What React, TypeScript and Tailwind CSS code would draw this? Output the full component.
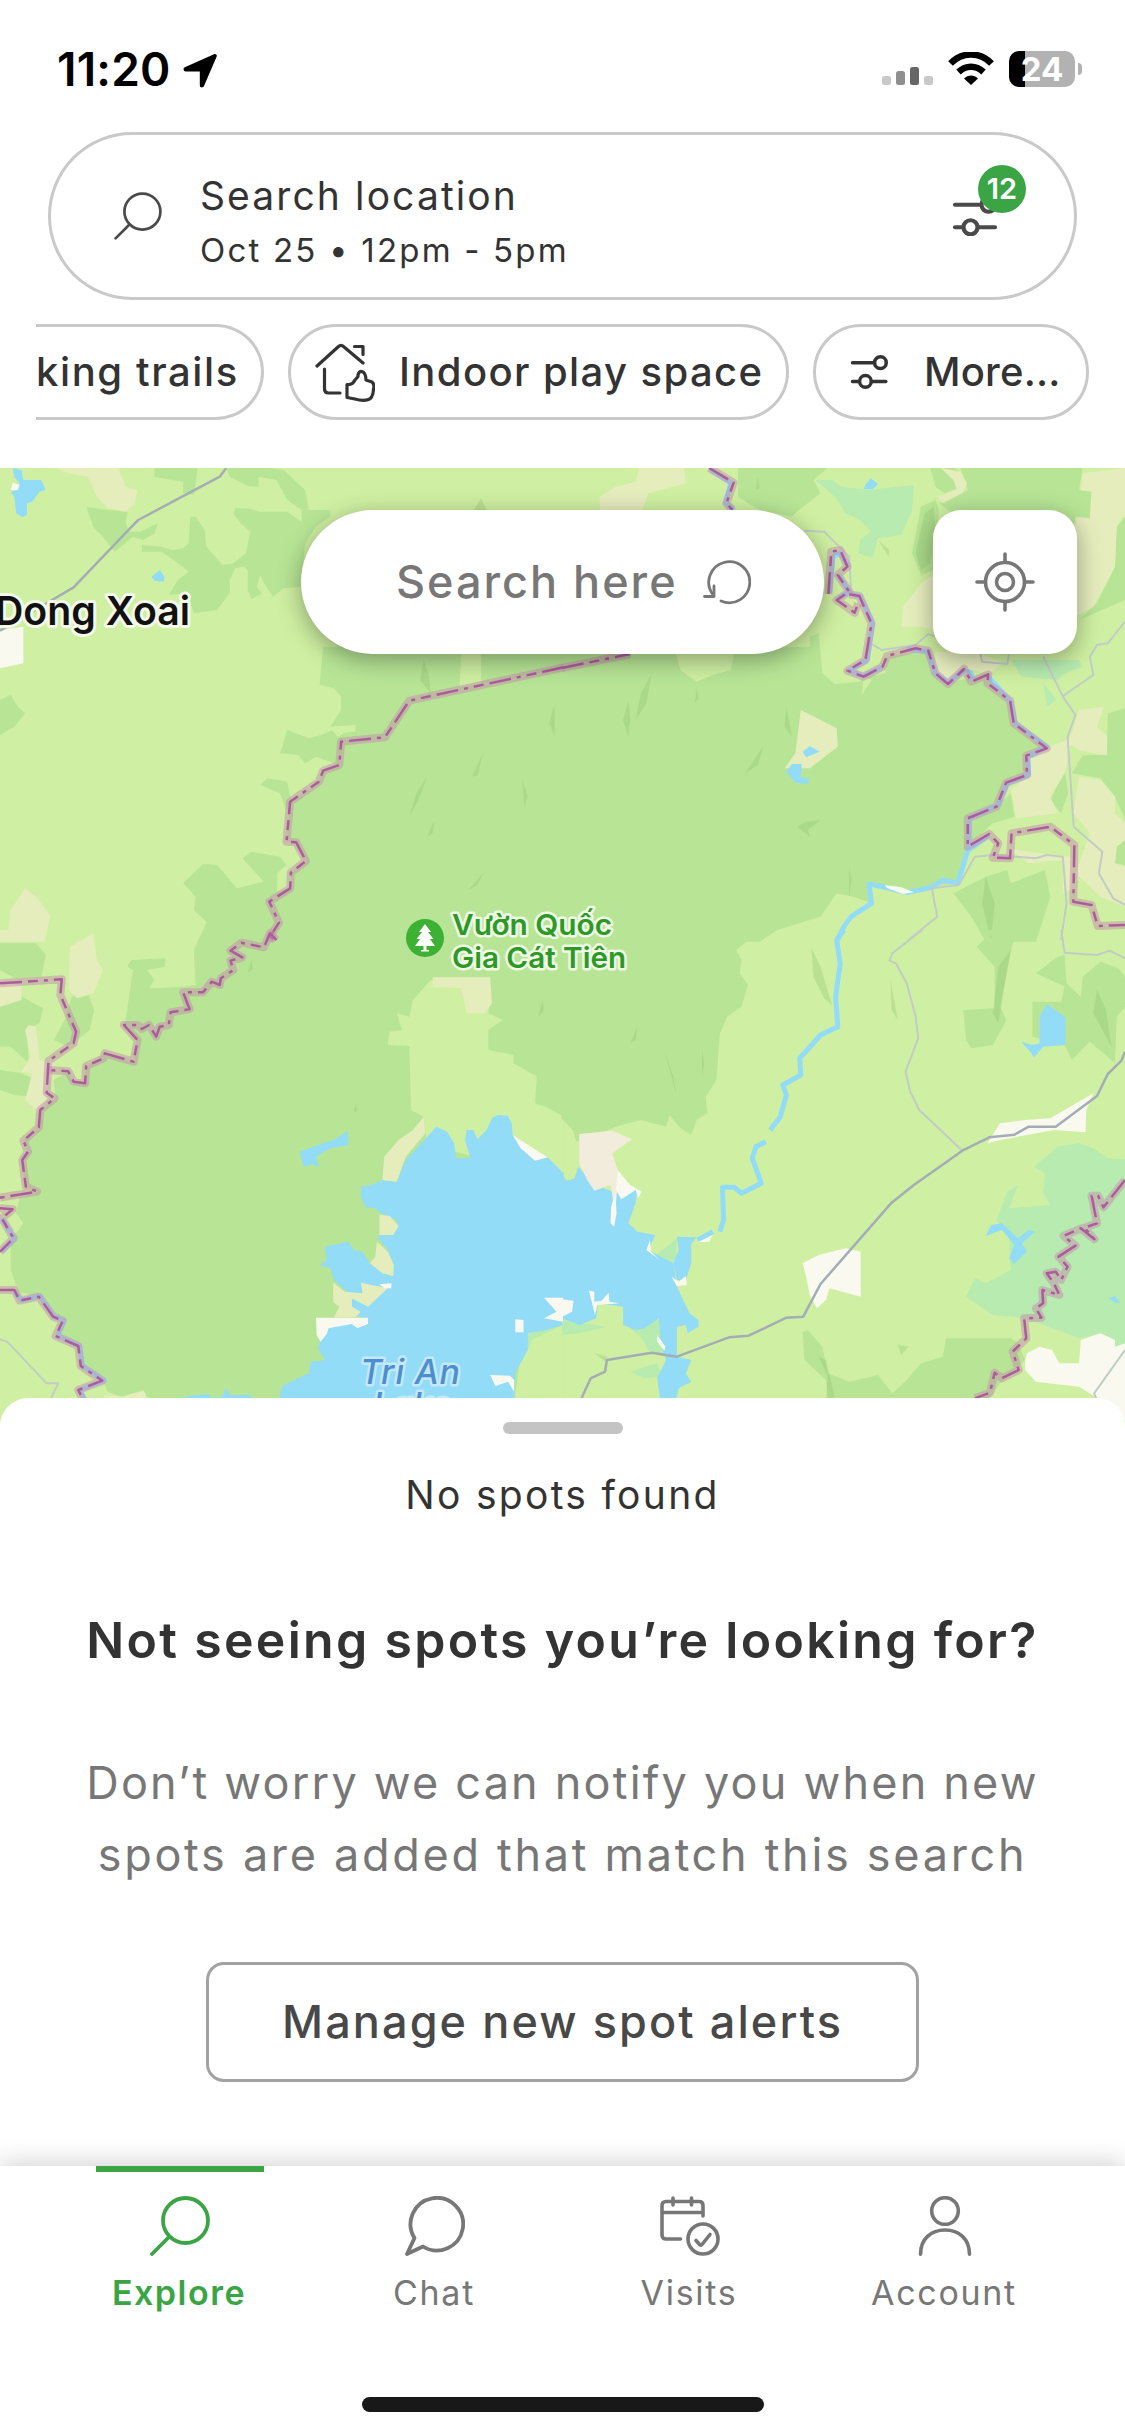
import React from 'react';

interface Tile {
  id: string;
  transform: string;
  forest: string[];
  shade: string[];
  meadow: string[];
  wetland: string[];
  sand: string[];
  town: string[];
  water: string[];
  rivers: string[];
  roads: string[];
  lanes: string[];
  borders: string[];
}

// Map geometry, split in four quadrants
const TILES: Tile[] = [
  {
    id: 'nw',
    transform: 'translate(0 460) scale(0.35906 0.33333)',
    forest: [
      '430,24 550,24 545,70 540,105 510,100 510,65 480,60 430,50',
      '630,24 750,24 790,30 850,90 860,150 920,150 920,170 880,200 850,250 838,380 790,385 760,410 735,370 725,345 715,380 730,400 700,418 690,390 690,330 680,320 655,325 640,360 640,400 605,450 540,460 520,400 470,405 495,360 525,335 490,305 450,275 395,275 395,255 450,260 480,270 510,265 525,250 530,170 545,170 570,210 575,260 620,315 650,310 685,280 697,215 670,190 650,160 655,145 690,145 725,155 800,155 840,185 840,150 800,120 770,60 720,50 720,80 690,78 640,50',
      '240,140 300,150 355,155 350,190 360,215 390,215 440,190 430,220 400,240 370,230 320,275 290,235 260,200',
      '0,720 30,705 50,740 70,760 40,800 0,825',
      '1568,560 900,560 890,675 930,685 950,710 950,750 920,800 990,795 990,815 960,818 940,830 925,810 895,825 860,835 800,810 780,880 830,885 850,910 880,890 945,915 900,935 885,970 805,1030 798,1055 780,1000 725,975 745,955 800,965 810,1020 798,1145 825,1145 852,1205 810,1240 810,1285 772,1295 772,1240 798,1215 780,1190 700,1175 675,1195 700,1225 735,1265 660,1285 605,1215 565,1212 510,1270 545,1310 540,1350 575,1385 555,1445 1568,1445',
    ],
    shade: [
      '1190,950 1160,1000 1140,1070 1165,1020',
      '1345,880 1315,950 1330,945',
      '1345,1240 1305,1290 1330,1275',
      '1180,600 1170,660 1200,700 1195,650',
      '1210,1080 1190,1130 1205,1120',
      '1455,960 1460,1040 1470,1010',
      '1545,730 1530,790 1545,830',
      '1340,115 1320,150 1355,150',
    ],
    meadow: ['1285,575 1340,575 1340,670 1280,682'],
    wetland: [],
    sand: [
      '160,24 330,24 350,80 382,90 375,130 350,155 300,145 270,110 245,50 190,40',
      '70,1285 100,1310 140,1365 125,1445 20,1445 30,1350',
    ],
    town: ['0,510 65,500 65,610 0,625', '30,90 35,68 55,75 55,90'],
    water: [
      '35,24 60,30 65,60 115,60 127,90 110,95 90,125 75,130 75,165 62,172 45,160 40,110 30,95 50,90 55,72 40,50',
      '422,350 445,330 458,350 456,365 430,362',
    ],
    rivers: [],
    roads: ['630,24 612,50 385,180 362,205 205,382 145,420 0,512'],
    lanes: [],
    borders: [
      '1570,622 1140,722 1072,832 950,845 945,915 900,932 888,965 808,1025 798,1145 825,1147 852,1203 810,1238 808,1285 750,1325 777,1388 752,1430 765,1440',
    ],
  },
  {
    id: 'ne',
    transform: 'translate(562 460) scale(0.35906 0.33333)',
    forest: [
      '0,575 690,560 690,530 715,520 725,640 760,672 830,665 840,650 900,640 905,590 1020,572 1040,640 1075,670 1185,640 1250,720 1260,790 1345,862 1295,885 1295,945 1235,970 1210,1040 1130,1075 1130,1160 1100,1270 1030,1280 960,1298 860,1270 862,1330 810,1310 765,1300 720,1370 600,1410 550,1445 0,1445',
      '490,24 740,24 700,60 720,100 660,150 640,170 550,150 490,110',
      '1025,24 1095,24 1120,60 1100,85 1065,100 1040,80',
      '1110,24 1450,24 1440,90 1475,95 1470,180 1430,190 1100,170 1050,130 1130,90',
      '1520,760 1568,745 1568,1080 1540,1010 1500,955 1420,940 1450,885 1518,885',
      '1400,930 1410,1000 1390,1060 1360,1020',
      '1210,1040 1250,1000 1260,1070 1200,1090 1130,1160 1130,1080',
      '1090,1300 1180,1250 1240,1230 1250,1270 1345,1230 1360,1310 1320,1445 1180,1445 1140,1370',
      '1545,1150 1568,1140 1568,1215 1540,1210',
      '1568,170 1545,200 1540,320 1490,430 1440,480 1568,420',
      '1000,140 1040,120 1050,150 1035,330 1000,345 975,280',
    ],
    shade: [
      '1010,160 1035,140 1040,200 1025,310 1000,330 985,280',
      '250,640 220,700 205,780 235,730',
      '375,680 370,730 380,715',
      '560,860 510,940 545,915',
      '680,1085 655,1100 690,1130 685,1110 720,1080',
      '800,1220 800,1310 806,1260',
      '625,740 620,800 640,830',
      '185,720 170,780 185,830 190,780',
      '1180,1250 1170,1330 1195,1445 1205,1330',
      '880,240 910,290 912,270',
      '545,50 540,90 550,85',
      '1450,1160 1470,1210 1462,1170',
    ],
    meadow: ['315,575 480,575 470,630 420,645 375,665 330,630', '840,650 862,660 835,705'],
    wetland: [
      '705,60 750,60 780,80 850,90 980,75 975,150 945,225 880,235 865,295 825,280 830,240 860,215 830,180 790,160 760,110',
      '1250,600 1440,600 1450,620 1400,640 1380,660 1280,650',
      '1340,670 1378,720 1350,740',
    ],
    sand: [
      '215,24 340,24 345,70 240,100 225,150 105,150 105,110 150,80 205,65',
      '1055,24 1110,35 1128,70 1115,100 1060,130 1045,110 1100,90 1090,60',
      '1450,40 1568,24 1568,160 1545,200 1540,320 1480,440 1430,470 1430,170 1470,175 1475,95 1445,90',
      '1040,340 1040,510 1000,500 945,500 950,440 1000,370',
      '1040,575 1160,580 1230,610 1190,640 1120,625 1075,670 1040,640',
      '665,750 765,805 768,860 690,925 620,925 650,880',
      '1290,885 1350,862 1420,835 1400,940 1360,1010 1380,1060 1265,1075 1250,990 1300,945',
      '1440,750 1510,740 1490,800 1518,830 1518,885 1480,880 1440,870 1410,850',
      '1440,950 1500,960 1540,1010 1540,1060 1568,1090 1568,1140 1545,1160 1540,1210 1568,1220 1568,1340 1500,1310 1430,1240 1470,1120 1425,1060',
      '1240,1165 1330,1180 1420,1190 1420,1290 1395,1300 1395,1200 1300,1210',
    ],
    town: [],
    water: [
      '845,75 860,55 880,72 865,88 840,88',
      '670,875 690,858 718,875 680,892',
      '625,935 640,912 668,912 665,950 688,958 685,972 650,968',
      '1120,625 1145,632 1150,655 1135,665',
    ],
    rivers: [
      '1130,1170 1115,1225 1100,1270 1060,1260 1030,1282 960,1298 900,1282 855,1272 862,1330 805,1370 785,1400 765,1445',
      '415,30 470,68 456,125 480,155',
      '745,400 755,290 775,280 798,320',
      '770,345 800,395 770,415',
      '810,403 832,410 865,490 850,600 800,632 840,648 893,620',
      '960,568 1020,575 1040,640 1075,668 1120,630',
      '1187,650 1250,725 1262,790 1350,860 1297,890 1300,945 1240,970 1215,1035 1135,1075 1133,1170 1190,1125',
    ],
    roads: [],
    lanes: [
      '675,212 730,215 800,290 805,390',
      '860,550 890,570 985,555 1020,522 1040,530',
      '1165,580 1170,605 1240,612 1245,580',
      '1340,590 1395,710 1430,765 1408,830 1425,1100 1505,1175 1495,1240 1535,1315 1568,1335',
      '1568,485 1520,550 1490,555 1470,590 1480,645 1395,708',
      '1105,1275 1150,1190 1200,1185 1320,1195 1350,1185 1395,1190 1405,1330 1390,1440',
      '1105,1275 1030,1285 1045,1370 965,1440',
    ],
    borders: [
      '0,624 190,582',
      '410,24 478,68 458,130 475,150',
      '742,402 750,275 775,270 795,320 768,345 800,395 765,420 815,458 825,430',
      '800,403 828,408 862,490 845,600 795,632 840,650 893,620 905,588 985,565 1020,572 1040,640 1075,672 1120,627 1140,665 1187,643 1185,670 1248,722 1258,790 1350,865 1293,887 1295,945 1237,968 1210,1040 1130,1075 1130,1160 1190,1122 1215,1150 1200,1193 1248,1195 1252,1120 1360,1100 1427,1155 1424,1325 1475,1335 1492,1398 1568,1395',
    ],
  },
  {
    id: 'sw',
    transform: 'translate(0 930) scale(0.35906 0.33333)',
    forest: [
      '565,0 540,60 545,165 510,170 415,175 430,150 410,120 460,110 460,85 365,90 355,110 370,120 350,270 345,285 380,330 375,395 290,370 240,410 235,460 200,455 190,425 150,450 155,505 110,540 108,590 65,630 80,665 62,690 70,770 105,785 55,800 45,850 65,880 30,930 30,1020 50,1085 110,1100 170,1170 155,1220 215,1245 225,1310 285,1350 300,1385 340,1400 400,1380 410,1400 520,1470 1570,1470 1570,0',
      '0,40 100,40 128,75 115,140 40,145 0,120',
      '0,210 60,200 120,235 110,280 75,300 80,400 30,350 0,350',
      '0,420 60,430 110,455 95,500 40,495 0,480',
      '200,200 245,190 262,240 250,300 190,350 150,330 180,270',
    ],
    shade: ['990,520 985,550 995,540', '1510,210 1500,260 1515,240', '700,90 690,130 705,115', '1460,80 1455,120 1465,110'],
    meadow: [
      '1200,150 1150,210 1140,260 1105,250 1120,300 1085,305 1080,345 1140,348 1145,540 1180,560 1190,640 1570,760 1570,560 1520,530 1490,520 1495,440 1430,400 1430,375 1360,360 1360,300 1400,270 1360,250 1365,150',
      '1460,1200 1570,1180 1570,1470 1425,1470',
      '60,1470 220,1405 290,1385 300,1470',
    ],
    wetland: ['1470,1260 1465,1215 1500,1200 1568,1180 1540,1200 1480,1230'],
    sand: [
      '1205,142 1365,142 1370,220 1350,250 1300,250 1285,175 1205,170',
      '195,50 260,10 270,90 287,120 260,190 215,205 190,180',
      '80,285 100,290 110,390 150,400 130,500 110,550 70,510 90,430 60,425 85,380 70,300',
      '0,150 60,165 60,210 0,230',
      '0,0 60,0 60,30 0,35',
      '290,1395 340,1400 400,1382 410,1410 290,1410',
    ],
    town: [],
    water: [
      '1190,620 1215,590 1245,605 1265,640 1270,685 1310,685 1295,630 1300,600 1318,600 1330,628 1355,600 1370,565 1385,555 1415,557 1425,580 1428,615 1450,650 1490,690 1525,682 1570,730 1570,1185 1520,1200 1470,1210 1470,1260 1435,1330 1430,1470 780,1470 780,1385 790,1365 860,1330 865,1295 905,1290 885,1255 890,1240 900,1190 1020,1170 980,1150 980,1110 1010,1095 970,1090 930,1050 920,1015 890,1005 910,990 905,950 970,935 985,960 1010,965 1030,1000 1060,1020 1090,1040 1095,1000 1080,960 1050,920 1105,900 1105,870 1060,850 1040,832 1020,835 1005,800 1005,770 1035,765 1065,750 1105,755 1130,690',
      '835,665 900,640 930,630 968,602 970,645 920,655 880,680 888,712 870,703 845,710',
      '520,1398 580,1393 590,1404 620,1400 628,1372 640,1395 700,1395 700,1420 520,1420',
    ],
    rivers: ['5,865 40,925 5,965', '40,1085 60,1110 112,1098 150,1160 178,1172 160,1218 222,1248 230,1308 290,1352 222,1380 235,1410'],
    roads: [],
    lanes: ['0,1228 20,1235 130,1360 162,1360 140,1410'],
    borders: [
      '770,30 752,10 735,52 672,38 642,62 675,82 642,92 650,120 615,145 612,165 590,155 565,187 510,187 528,237 475,247 470,285 445,290 435,320 415,285 395,297 385,285 345,285 383,330 372,395 292,370 288,385 240,408 237,460 205,455 190,424 135,420',
      '0,160 172,148 168,195 212,305 205,340 135,393 130,488 152,505 112,540 108,592 65,632 78,665 62,690 72,770 103,785 0,803',
      '0,835 35,838 5,865 38,925 0,965',
      '0,1080 40,1080 55,1112 108,1100 148,1160 175,1172 155,1218 218,1248 225,1308 285,1352 218,1380 232,1410',
    ],
  },
  {
    id: 'se',
    transform: 'translate(562 930) scale(0.35906 0.33333)',
    forest: [
      '-2,0 545,0 520,30 485,60 500,90 495,130 518,165 500,230 460,260 440,310 430,450 400,500 405,550 375,570 360,615 325,590 300,555 290,590 220,570 165,585 40,635 30,600 -2,565',
      '1155,50 1180,25 1258,30 1245,90 1220,230 1238,270 1200,345 1140,355 1125,330 1118,240 1205,235 1205,110',
      '1310,215 1390,215 1400,170 1320,130 1380,80 1400,75 1405,160 1445,200 1450,140 1500,95 1550,115 1568,140 1568,230 1545,260 1540,400 1470,335 1420,390 1400,345 1310,320',
      '670,1205 685,1200 725,1250 740,1330 800,1355 880,1335 920,1390 960,1350 1000,1300 1060,1280 1070,1225 1250,1225 1270,1240 1290,1290 1250,1330 1230,1345 1150,1470 750,1470 735,1350 675,1290',
      '1170,0 1330,0 1300,12 1180,20',
    ],
    shade: [
      '1215,110 1250,60 1215,280 1200,250',
      '1490,180 1480,250 1530,350 1515,240',
      '715,1280 740,1340 735,1410 760,1400 735,1290',
      '390,360 390,440 396,400',
      '210,290 190,340 205,330',
      '285,360 310,440 320,500 300,420',
      '695,55 720,110 752,225 730,205 700,140',
      '915,150 935,270 918,240',
      '90,1268 125,1280 122,1295',
      '935,1245 965,1250 945,1275',
    ],
    meadow: [],
    wetland: [
      '1315,710 1380,650 1440,640 1480,655 1520,685 1568,688 1568,1260 1530,1240 1500,1210 1440,1225 1380,1200 1290,1165 1200,1155 1125,1100 1150,1045 1180,1060 1250,1020 1245,920 1210,870 1240,785 1270,765 1245,835 1360,825 1340,790 1345,730',
      '0,1170 125,1190 50,1210 0,1215',
      '190,1195 275,1165 285,1280 240,1260 220,1220',
      '190,1325 265,1300 280,1340 230,1345',
      '262,975 320,925 318,1005 285,1000',
    ],
    sand: [],
    town: [
      '670,1000 715,975 790,955 832,965 832,1100 745,1075 735,1110 710,1135 690,1095 680,1040',
      '1185,640 1220,580 1290,570 1360,565 1480,490 1460,540 1458,607 1370,600 1220,630',
      '1290,1290 1295,1270 1330,1250 1365,1260 1385,1300 1440,1300 1445,1230 1500,1210 1540,1230 1540,1250 1568,1240 1568,1470 1500,1410 1440,1370 1320,1355 1290,1320',
    ],
    water: [
      '-2,735 15,752 35,745 45,710 90,765 155,790 210,780 205,820 185,880 210,905 260,915 240,960 310,1000 320,1070 355,1150 380,1170 380,1190 350,1210 345,1185 320,1190 320,1280 360,1290 345,1330 360,1355 325,1375 315,1420 275,1420 265,1345 290,1290 275,1240 270,1165 230,1195 205,1200 170,1185 170,1130 100,1120 95,1165 50,1185 -2,1165',
      '320,920 375,922 360,940 360,1000 345,1050 320,1050 310,1000 325,960',
      '1180,918 1195,885 1225,880 1270,925 1300,900 1318,905 1280,940 1295,965 1258,1002 1245,985 1260,945 1225,900',
      '1278,335 1310,345 1330,340 1330,260 1350,222 1402,262 1402,345 1340,350 1315,382 1300,360',
      '1522,1105 1540,1098 1555,1120 1540,1118',
    ],
    rivers: [
      '785,0 765,30 775,100 762,200 768,290 720,315 662,385 665,435 615,465 625,495 608,560 580,600',
      '568,635 540,650 530,685 555,760 500,790 480,772 447,772 450,870 440,905',
      '420,905 378,930',
    ],
    roads: [
      '52,1410 80,1345 120,1325 125,1290 250,1268 320,1280 465,1222 520,1217 625,1163 672,1160 720,1062 918,818 980,765 1115,662 1190,622 1260,614 1300,590 1375,590 1490,498 1520,432 1558,392 1568,365',
    ],
    lanes: [
      '1003,0 920,70 912,92 930,100 960,160 985,260 992,325 957,425 970,485 995,540 1115,662',
      '1568,1260 1482,1390 1490,1410',
      '1390,0 1400,68 1490,75 1525,62 1568,85',
    ],
    borders: [
      '1568,750 1508,832 1493,797 1475,797 1490,880 1455,893 1483,928 1445,895 1397,918 1430,947 1383,980 1408,1010 1390,1050 1375,1025 1350,1030 1370,1060 1385,1095 1338,1080 1340,1120 1320,1135 1335,1163 1287,1165 1293,1225 1255,1265 1272,1320 1225,1345 1205,1328 1192,1388 1150,1405',
    ],
  },
];

// Shoreline details that sit on top of the lakes
const SHORE: { transform: string; fill: string; points: string }[] = [
  ['sw', '#e6edbd', '1180,560 1185,610 1130,680 1105,755 1065,750 1070,680 1110,630 1150,600'],
  ['sw', '#e6edbd', '1057,855 1085,857 1110,888 1095,915 1057,915'],
  ['sw', '#e6edbd', '1050,935 1080,965 1097,1005 1095,1038 1065,1030 1030,1000 1045,980'],
  ['sw', '#e6edbd', '928,1058 960,1085 1010,1090 1005,1058 1080,1075 1025,1130 980,1105 980,1130 1005,1145 990,1162 930,1162 945,1130 928,1115'],
  ['sw', '#f9f9ef', '880,1163 1025,1163 1025,1182 995,1195 980,1182 915,1195 910,1212 893,1235 882,1215'],
  ['sw', '#f9f9ef', '1057,1063 1090,1060 1090,1075 1070,1075'],
  ['sw', '#f9f9ef', '1435,1168 1458,1170 1458,1207 1435,1207'],
  ['sw', '#f9f9ef', '1515,1103 1568,1103 1568,1175 1515,1165 1550,1145'],
  ['sw', '#f9f9ef', '1365,1335 1420,1337 1432,1350 1432,1385 1415,1355 1380,1368'],
  ['sw', '#f9f9ef', '1428,615 1485,655 1525,682 1490,692 1450,655'],
  ['se', '#f1ecdc', '48,612 140,602 195,628 140,670 155,720 155,760 148,850 135,765 90,782 70,750 48,700'],
  ['se', '#f9f9ef', '155,720 190,765 222,785 212,805 205,780 165,808 148,775 152,850 145,890 135,880 137,830 150,780'],
  ['se', '#f9f9ef', '0,1108 32,1112 28,1145 0,1160'],
  ['se', '#f9f9ef', '75,1082 90,1085 90,1115 110,1112 130,1088 132,1115 160,1120 98,1125 92,1155'],
  ['se', '#f9f9ef', '245,930 248,965 272,990 235,960'],
  ['se', '#f9f9ef', '305,1040 325,1055 345,1038 348,1065 320,1068'],
  ['se', '#f9f9ef', '265,1215 288,1250 285,1262 265,1235'],
  ['se', '#f9f9ef', '378,937 420,915 410,935'],
  ['ne', '#f9f9ef', '900,1275 945,1282 980,1297 950,1302 905,1284'],
].map(([id, fill, points]) => ({
  transform: TILES.find((t) => t.id === id)!.transform,
  fill,
  points,
}));

const Shapes = ({ points, fill, opacity }: { points: string[]; fill: string; opacity?: number }) => (
  <>
    {points.map((p) => (
      <polygon key={p} points={p} fill={fill} opacity={opacity} />
    ))}
  </>
);

interface LinesProps {
  points: string[];
  stroke: string;
  width: number;
  dash?: string;
  opacity?: number;
}

const Lines = ({ points, stroke, width, dash, opacity }: LinesProps) => (
  <>
    {points.map((p) => (
      <polyline
        key={p}
        points={p}
        fill="none"
        stroke={stroke}
        strokeWidth={width}
        strokeDasharray={dash}
        strokeLinejoin="round"
        opacity={opacity}
        vectorEffect="non-scaling-stroke"
      />
    ))}
  </>
);

const MapCanvas = () => (
  <svg className="block h-[990px] w-[1125px]" viewBox="0 468 1125 990" fontFamily="Inter, sans-serif">
    <rect y="468" width="1125" height="990" fill="#cff0a2" />
    {TILES.map((t) => (
      <g key={t.id} transform={t.transform}>
        <Shapes points={t.forest} fill="#b7e595" />
        <Shapes points={t.shade} fill="#8fc070" opacity={0.32} />
        <Shapes points={t.meadow} fill="#cff0a2" />
        <Shapes points={t.wetland} fill="#b7ebb0" />
        <Shapes points={t.sand} fill="#e6edbd" />
        <Shapes points={t.town} fill="#f9f9ef" />
        <Shapes points={t.water} fill="#92dcf8" />
        <Lines points={t.rivers} stroke="#92dcf8" width={5} />
      </g>
    ))}
    {SHORE.map((s) => (
      <polygon key={s.points} transform={s.transform} points={s.points} fill={s.fill} />
    ))}
    {TILES.map((t) => (
      <g key={t.id} transform={t.transform}>
        <Lines points={t.lanes} stroke="#c2ccc6" width={2} />
        <Lines points={t.roads} stroke="#a3adb6" width={2.5} />
        <Lines points={t.borders} stroke="#c58fae" width={8} opacity={0.5} />
        <Lines points={t.borders} stroke="#ad5c9b" width={2.5} dash="22 6 10 6 4 6" />
      </g>
    ))}

    <g fontWeight="600" paintOrder="stroke" strokeLinejoin="round">
      <text x="-5" y="625" fontSize="40" fill="#111" stroke="#f4f8ea" strokeWidth="6" textLength="195" lengthAdjust="spacingAndGlyphs">
        Dong Xoai
      </text>
      <g fill="#2b9a26" stroke="#f1f8e6" strokeWidth="5" fontSize="29">
        <text x="452" y="935" textLength="160" lengthAdjust="spacingAndGlyphs">Vườn Quốc</text>
        <text x="452" y="968" textLength="174" lengthAdjust="spacingAndGlyphs">Gia Cát Tiên</text>
      </g>
      <g fill="#4b8fd0" stroke="#c4e8f8" strokeWidth="5" fontSize="34" fontStyle="italic" fontWeight="500">
        <text x="360" y="1384" textLength="100">Tri An</text>
        <text x="373" y="1417" textLength="78">Lake</text>
      </g>
    </g>

    <circle cx="425" cy="938" r="19" fill="#3cb133" />
    <path d="M425 924l6 8h-3l5.500 7h-3.500l5 7h-8.500v4h2.500v1.500h-8v-1.500h2.500v-4h-8.500l5-7h-3.500l5.500-7h-3z" fill="#fff" />
  </svg>
);

const SearchIcon = ({ className, strokeWidth }: { className: string; strokeWidth: number }) => (
  <svg className={className} viewBox="0 0 60 60" fill="none" stroke="currentColor" strokeWidth={strokeWidth} strokeLinecap="round">
    <circle cx="35.500" cy="24.500" r="22.500" />
    <path d="M19 41L2 58" />
  </svg>
);

const SlidersIcon = ({ className }: { className: string }) => (
  <svg className={className} viewBox="0 0 48 40" fill="none" stroke="currentColor" strokeWidth="4.200" strokeLinecap="round">
    <path d="M3 8.750H29M3 31.250H11M26 31.250H43" />
    <circle cx="36.500" cy="8.750" r="7" />
    <circle cx="18.500" cy="31.250" r="7" />
  </svg>
);

const StatusBar = () => (
  <div className="flex h-[132px] items-start pt-[44px] pl-[57px]">
    <span className="w-[111px] text-[46px] leading-[50px] font-semibold tracking-[0.2px] whitespace-nowrap text-black">11:20</span>
    <svg className="mt-[9px] ml-[15px] h-[35px] w-[35px]" viewBox="0 0 35 35">
      <path d="M31 1.200c1.800-.8 3.400.8 2.600 2.600L21 33c-1 2.200-4.200 1.800-4.200-.8V18.500H2.800C.3 18.500-.3 15.300 1.800 14.300z" fill="#000" />
    </svg>
    <div className="mr-[43px] ml-auto flex items-start pt-[7px]">
      <svg className="mt-4 h-[18px] w-[51px]" viewBox="0 0 51 18">
        <rect y="9" width="9" height="9" rx="2.500" fill="#c9c9c9" />
        <rect x="14" y="4" width="9" height="14" rx="2.500" fill="#8f8f8f" />
        <rect x="28" width="9" height="18" rx="2.500" fill="#666" />
        <rect x="42" y="9" width="9" height="9" rx="2.500" fill="#c9c9c9" />
      </svg>
      <svg className="mt-px ml-[15px] h-[33px] w-[46px]" viewBox="0 0 46 33">
        <path d="M2.500 11.500C14-.5 32-.5 43.500 11.500" fill="none" stroke="#000" strokeWidth="6.500" />
        <path d="M10.500 20C18 13 28 13 35.500 20" fill="none" stroke="#000" strokeWidth="6.500" />
        <path d="M16 26.500C20 22.500 26 22.500 30 26.500L23 33z" fill="#000" />
      </svg>
      <div className="ml-[15px] flex h-9 w-[66px] items-center justify-center rounded-[10px] bg-linear-to-r from-black from-[24%] to-[#b2b2b2] to-[24%]">
        <span className="text-[33px] leading-9 font-bold text-white">24</span>
      </div>
      <div className="mt-3 ml-[3px] h-3 w-1 rounded-r-full bg-[#b2b2b2]" />
    </div>
  </div>
);

const SearchBar = () => (
  <div className="ml-12 flex h-[168px] w-[1029px] items-center rounded-full border-[3px] border-[#c9c9c9] pr-[74px] pl-[63px] text-[#333]">
    <SearchIcon className="h-12 w-12 text-[#4a4a4a]" strokeWidth={3.4} />
    <div className="ml-[38px] self-start pt-[34px]">
      <p className="text-[39px] leading-[54px] tracking-[2.1px]">Search location</p>
      <p className="mt-[5px] text-[33px] leading-[44px] tracking-[2.2px]">Oct 25 • 12pm - 5pm</p>
    </div>
    <div className="relative ml-auto text-[#4a4a4a]">
      <SlidersIcon className="h-10 w-12" />
      <span className="absolute -top-[31px] left-[26px] flex h-12 w-12 items-center justify-center rounded-full bg-[#3ba546] text-[29px] font-semibold text-white">
        12
      </span>
    </div>
  </div>
);

const HouseIcon = () => (
  <svg className="h-[60px] w-[60px]" viewBox="0 0 60 60" fill="none" stroke="currentColor" strokeWidth="3.200" strokeLinecap="round" strokeLinejoin="round">
    <path d="M2 24L23.500 4.500Q26 2 28.500 4.500L48 21" />
    <path d="M39.500 4.500H48V12.500" />
    <path d="M9.500 27V47Q9.500 51 13.500 51H25" />
    <path d="M32 42.500H34.500Q38 42 40 38L43 34.500V33Q44 29 47 29.500Q51 31 51 38L57 40Q60 43 58.500 47Q58 56 53.500 57.500Q48 59.500 40 57L32 55.500Z" />
  </svg>
);

const FilterChips = () => (
  <div className="mt-6 ml-9 flex h-24 gap-6 overflow-hidden text-[40px] font-medium whitespace-nowrap text-[#333]">
    <button className="flex w-[228px] shrink-0 items-center rounded-r-full border-[3px] border-l-0 border-[#c9c9c9] tracking-[1.6px]">
      king trails
    </button>
    <button className="flex w-[501px] shrink-0 items-center gap-[24px] rounded-full border-[3px] border-[#c9c9c9] pl-6 tracking-[1.4px]">
      <HouseIcon />
      Indoor play space
    </button>
    <button className="flex w-[276px] shrink-0 items-center gap-[34px] rounded-full border-[3px] border-[#c9c9c9] pl-[34px] tracking-[0.2px]">
      <SlidersIcon className="h-[34px] w-10" />
      More...
    </button>
  </div>
);

const MapSection = () => (
  <section className="relative h-[930px] w-full">
    <MapCanvas />
    <button className="absolute top-[42px] left-[301px] flex h-36 w-[523px] items-center rounded-full bg-white pl-[95px] text-[45px] font-medium tracking-[2px] whitespace-nowrap text-[#777] shadow-[0_6px_24px_rgba(0,0,0,0.35)]">
      Search here
      <svg className="mr-[73px] ml-auto h-12 w-12" viewBox="0 0 48 48" fill="none" stroke="currentColor" strokeWidth="2.800" strokeLinecap="round" strokeLinejoin="round">
        <path d="M9.500 36A20.500 20.500 0 1 1 18 43" />
        <path d="M11 28V38.500H1.500" />
      </svg>
    </button>
    <button className="absolute top-[42px] right-12 flex h-36 w-36 items-center justify-center rounded-[28px] bg-white text-[#777] shadow-[0_6px_24px_rgba(0,0,0,0.35)]">
      <svg className="h-[60px] w-[60px]" viewBox="0 0 60 60" fill="none" stroke="currentColor" strokeWidth="3.600" strokeLinecap="round">
        <circle cx="30" cy="30" r="19.500" />
        <circle cx="30" cy="30" r="8.500" />
        <path d="M30 2V10M30 50V58M2 30H10M50 30H58" />
      </svg>
    </button>
  </section>
);

const ResultsSheet = () => (
  <section className="relative flex h-[768px] flex-col items-center rounded-t-[28px] bg-white text-center whitespace-nowrap text-[#333]">
    <div className="mt-6 h-3 w-[120px] rounded-full bg-[#c4c4c4]" />
    <p className="mt-[34px] text-[39px] leading-[54px] tracking-[2.3px]">No spots found</p>
    <h2 className="mt-[88px] text-[50px] leading-[60px] font-semibold tracking-[2.3px]">
      Not seeing spots you’re looking for?
    </h2>
    <p className="mt-[77px] text-[45px] leading-[72px] text-[#777]">
      <span className="tracking-[2.2px]">Don’t worry we can notify you when new</span>
      <br />
      <span className="tracking-[2.7px]">spots are added that match this search</span>
    </p>
    <button className="mt-[71px] h-[120px] w-[713px] rounded-[18px] border-[3px] border-[#a2a2a2] text-[45px] font-medium tracking-[2.1px] text-[#484848]">
      Manage new spot alerts
    </button>
  </section>
);

const ChatIcon = () => (
  <svg className="h-[60px] w-[60px]" viewBox="0 0 60 60" fill="none" stroke="currentColor" strokeWidth="3.800" strokeLinejoin="round" strokeLinecap="round">
    <path d="M9.500 42A26.300 26.300 0 1 1 18 50.500L2 58Z" />
  </svg>
);

const VisitsIcon = () => (
  <svg className="h-[60px] w-[60px]" viewBox="0 0 60 60" fill="none" stroke="currentColor" strokeWidth="3.600" strokeLinejoin="round" strokeLinecap="round">
    <path d="M20.500 43H6Q2 43 2 39V9.500Q2 5.500 6 5.500H39Q43 5.500 43 9.500V20M2 16.500H43M13 2V9M31.500 2V9" />
    <circle cx="43" cy="43" r="15" />
    <path d="M36 44.500L40 49Q41 49.500 42 48.500L50 38.500" />
  </svg>
);

const AccountIcon = () => (
  <svg className="h-[60px] w-[60px]" viewBox="0 0 60 60" fill="none" stroke="currentColor" strokeWidth="3.600" strokeLinecap="round">
    <circle cx="30" cy="15" r="13.300" />
    <path d="M5.500 58.200C5.500 43 16 34 30 34S54.500 43 54.500 58.200" />
  </svg>
);

const TABS = [
  { label: 'Explore', icon: <SearchIcon className="h-[60px] w-[60px]" strokeWidth={3.8} />, active: true },
  { label: 'Chat', icon: <ChatIcon />, active: false },
  { label: 'Visits', icon: <VisitsIcon />, active: false },
  { label: 'Account', icon: <AccountIcon />, active: false },
];

const TabBar = () => (
  <nav className="relative flex h-[270px] flex-col items-center bg-white shadow-[0_-3px_24px_rgba(0,0,0,0.18)]">
    <div className="grid w-[1020px] grid-cols-4">
      {TABS.map((tab) => (
        <button key={tab.label} className={tab.active ? 'flex flex-col items-center text-[#3ba546]' : 'flex flex-col items-center text-[#777]'}>
          <span className={tab.active ? 'h-1.5 w-[168px] bg-[#3ba546]' : 'h-1.5 w-[168px]'} />
          <span className="mt-6">{tab.icon}</span>
          <span
            className={
              tab.active
                ? 'mt-[15px] mr-0.5 text-[34px] leading-[44px] font-semibold tracking-[1.5px]'
                : 'mt-[15px] mr-0.5 text-[34px] leading-[44px] tracking-[1.7px]'
            }
          >
            {tab.label}
          </span>
        </button>
      ))}
    </div>
    <div className="mt-[82px] h-[15px] w-[402px] rounded-full bg-[#181818]" />
  </nav>
);

const App = () => {
  return (
    <div className="flex h-[2436px] w-[1125px] flex-col overflow-hidden bg-white font-['Inter',sans-serif]">
      <header className="h-[468px]">
        <StatusBar />
        <SearchBar />
        <FilterChips />
      </header>
      <MapSection />
      <ResultsSheet />
      <TabBar />
    </div>
  );
};

export default App;
